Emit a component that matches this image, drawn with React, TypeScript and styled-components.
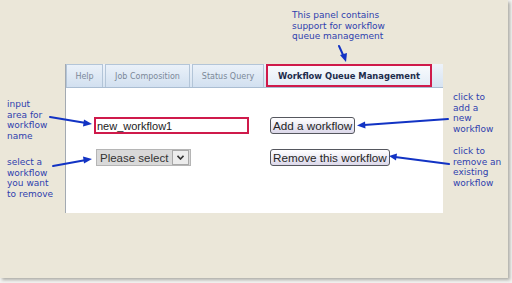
import React from "react";
import styled, { createGlobalStyle } from "styled-components";

const Global = createGlobalStyle`
  html, body { margin: 0; padding: 0; background: #f3f3f1; }
  body { width: 512px; height: 283px; overflow: hidden; }
`;

const Frame = styled.div`
  position: relative;
  width: 508px;
  height: 278px;
  background: #ebe7d9;
  box-shadow: 2px 2px 3px rgba(90, 90, 80, 0.45);
  display: grid;
  grid-template-columns: 65px 378px 1fr;
  grid-template-rows: 64px 149px 1fr;
`;

const Note = styled.div<{ $gap?: number }>`
  font-family: "DejaVu Sans", Verdana, sans-serif;
  font-size: 9px;
  line-height: 10.7px;
  color: #2f3fae;
  white-space: pre-line;
  margin-top: ${(p) => p.$gap ?? 0}px;
`;

const TopNotes = styled.div`
  grid-column: 1 / 4;
  padding: 10px 0 0 292px;
`;

const SideNotes = styled.div<{ $left: number; $top: number }>`
  display: flex;
  flex-direction: column;
  padding-left: ${(p) => p.$left}px;
  padding-top: ${(p) => p.$top}px;
`;

const Panel = styled.div`
  background: #ffffff;
  border-left: 1px solid #a3aab2;
  display: flex;
  flex-direction: column;
`;

const TabBar = styled.div`
  display: flex;
  align-items: flex-end;
  gap: 2px;
  height: 23px;
  border-bottom: 1px solid #aabdd2;
  background: linear-gradient(#eef3fa, #d6e3f1);
`;

const Tab = styled.div<{ $w: number; $active?: boolean }>`
  box-sizing: border-box;
  width: ${(p) => p.$w}px;
  height: 23px;
  display: flex;
  align-items: center;
  justify-content: center;
  font-family: "DejaVu Sans", Verdana, sans-serif;
  font-size: ${(p) => (p.$active ? "8.4px" : "8px")};
  font-weight: ${(p) => (p.$active ? 700 : 400)};
  color: ${(p) => (p.$active ? "#1d2c4c" : "#7b8898")};
  background: ${(p) =>
    p.$active
      ? "linear-gradient(#f7fafd, #e4edf7)"
      : "linear-gradient(#eaf1f9, #d2e0f0)"};
  border: ${(p) => (p.$active ? "2px solid #cf1a4b" : "1px solid #b3c5d8")};
  border-bottom: ${(p) => (p.$active ? "2px solid #cf1a4b" : "none")};
`;

const Content = styled.div`
  display: grid;
  grid-template-columns: 176px auto;
  row-gap: 15px;
  align-items: center;
  justify-items: start;
  padding: 29px 0 0 28px;
`;

const NameInput = styled.input`
  box-sizing: border-box;
  width: 155px;
  height: 17px;
  border: 2px solid #cf1a4b;
  padding: 0 0 0 1px;
  margin: 0;
  font-family: "Liberation Sans", Arial, sans-serif;
  font-size: 11px;
  color: #222;
  background: #fff;
  outline: none;
`;

const Button = styled.button`
  box-sizing: border-box;
  height: 17px;
  margin: 0;
  padding: 0 2px;
  border: 1px solid #55575e;
  border-radius: 3px;
  background: linear-gradient(#ffffff, #dcd8ea);
  font-family: "Liberation Sans", Arial, sans-serif;
  font-size: 11.7px;
  line-height: 14px;
  color: #252525;
`;

const FakeSelect = styled.div`
  box-sizing: border-box;
  margin-left: 2px;
  width: 95px;
  height: 17px;
  display: flex;
  align-items: center;
  justify-content: space-between;
  border: 1px solid #b5b5b5;
  background: #d9d9d9;
  padding: 0 1px 0 3px;
  font-family: "Liberation Sans", Arial, sans-serif;
  font-size: 11.5px;
  color: #333;
`;

const ArrowBox = styled.span`
  box-sizing: border-box;
  width: 17px;
  height: 15px;
  display: flex;
  align-items: center;
  justify-content: center;
  background: #ececec;
  border: 1px solid #a8a8a8;
`;

const Overlay = styled.svg`
  position: absolute;
  left: 0;
  top: 0;
  pointer-events: none;
`;

export default function App() {
  return (
    <>
      <Global />
      <Frame>
        <TopNotes>
          <Note>{"This panel contains\nsupport for workflow\nqueue management"}</Note>
        </TopNotes>
        <SideNotes $left={7} $top={35}>
          <Note>{"input\narea for\nworkflow\nname"}</Note>
          <Note $gap={15}>{"select a\nworkflow\nyou want\nto remove"}</Note>
        </SideNotes>
        <Panel>
          <TabBar>
            <Tab $w={37}>Help</Tab>
            <Tab $w={85}>Job Composition</Tab>
            <Tab $w={72}>Status Query</Tab>
            <Tab $w={166} $active>
              Workflow Queue Management
            </Tab>
          </TabBar>
          <Content>
            <NameInput readOnly value="new_workflow1" />
            <Button>Add a workflow</Button>
            <FakeSelect>
              <span>Please select</span>
              <ArrowBox>
                <svg width="7" height="5" viewBox="0 0 7 5">
                  <path d="M0.5 0.8 L3.5 4 L6.5 0.8" fill="none" stroke="#333" strokeWidth="1.6" />
                </svg>
              </ArrowBox>
            </FakeSelect>
            <Button>Remove this workflow</Button>
          </Content>
        </Panel>
        <SideNotes $left={10} $top={28}>
          <Note>{"click to\nadd a\nnew\nworkflow"}</Note>
          <Note $gap={11}>{"click to\nremove an\nexisting\nworkflow"}</Note>
        </SideNotes>
        <Overlay width="508" height="278" viewBox="0 0 508 278">
          <g stroke="#1233c4" strokeWidth="2" fill="none" strokeLinecap="round">
            <line x1="339" y1="46" x2="344" y2="57" />
            <line x1="50" y1="117" x2="86" y2="123" />
            <line x1="53" y1="166" x2="86" y2="160" />
            <line x1="448" y1="119" x2="364" y2="125" />
            <line x1="449" y1="164" x2="395" y2="157" />
          </g>
          <g fill="#1233c4">
            <polygon points="346,62 340,55 347,53" />
            <polygon points="92,124 84,119.5 83,126.5" />
            <polygon points="92,159 83,156.5 84,163.5" />
            <polygon points="357,125.5 365,121.5 365.5,128.5" />
            <polygon points="389,156 397,153.5 396,160.5" />
          </g>
        </Overlay>
      </Frame>
    </>
  );
}
